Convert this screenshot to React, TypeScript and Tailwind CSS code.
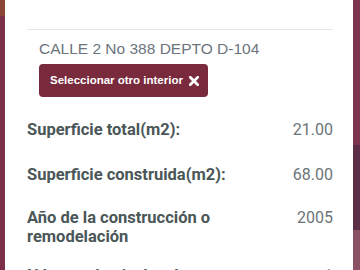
const rows = [
  { label: 'Superficie total(m2):', value: '21.00', gap: 'mt-[23px]' },
  { label: 'Superficie construida(m2):', value: '68.00', gap: 'mt-[26px]' },
  { label: 'Año de la construcción o remodelación', value: '2005', gap: 'mt-[24px]' },
  { label: 'Número de niveles de construcción', value: '1', gap: 'mt-[20px]' },
];

function TimesIcon() {
  return (
    <svg width="10" height="10" viewBox="0 0 10 10" className="ml-[6px] shrink-0">
      <path d="M1.3 1.3 L8.7 8.7 M8.7 1.3 L1.3 8.7" stroke="white" strokeWidth="2.7" strokeLinecap="square" />
    </svg>
  );
}

export default function App() {
  return (
    <div className="flex w-[360px] h-[270px] overflow-hidden bg-[#7b3047]">
      {/* blurred backdrop, left edge */}
      <div className="flex flex-col w-[5px] shrink-0">
        <div className="h-[16px] bg-[#8a4536]" />
        <div className="flex-1 bg-[#7b3047]" />
      </div>

      <div className="flex-1 bg-white pt-[29px] pl-[22px] pr-[20px] font-['Roboto',sans-serif]">
        <div className="border-t border-[#e3e6ea]" />

        <div className="pl-[12px]">
          <p className="mt-[7px] text-[15.5px] leading-[24px] text-[#6c757d] font-['Liberation_Sans',Arial,sans-serif]">
            CALLE 2 No 388 DEPTO D-104
          </p>
          <button
            type="button"
            className="mt-[3px] flex items-center h-[33px] pl-[11px] pr-[9px] rounded-[4px] bg-[#7a2a3d] text-white text-[11.5px] font-bold font-['Liberation_Sans',Arial,sans-serif]"
          >
            Seleccionar otro interior
            <TimesIcon />
          </button>
        </div>

        {rows.map((row) => (
          <div key={row.label} className={`${row.gap} flex items-start justify-between`}>
            <span className="w-[218px] text-[16.5px] leading-[19px] font-bold text-[#4a5657]">
              {row.label}
            </span>
            <span className="text-[16px] leading-[19px] text-[#6b7478]">{row.value}</span>
          </div>
        ))}
      </div>

      {/* blurred backdrop, right edge */}
      <div className="flex flex-col w-[7px] shrink-0">
        <div className="h-[145px] bg-[#7c3550]" />
        <div className="h-[85px] bg-[#5c2f48]" />
        <div className="flex-1 bg-[#8a5064]" />
      </div>
    </div>
  );
}
